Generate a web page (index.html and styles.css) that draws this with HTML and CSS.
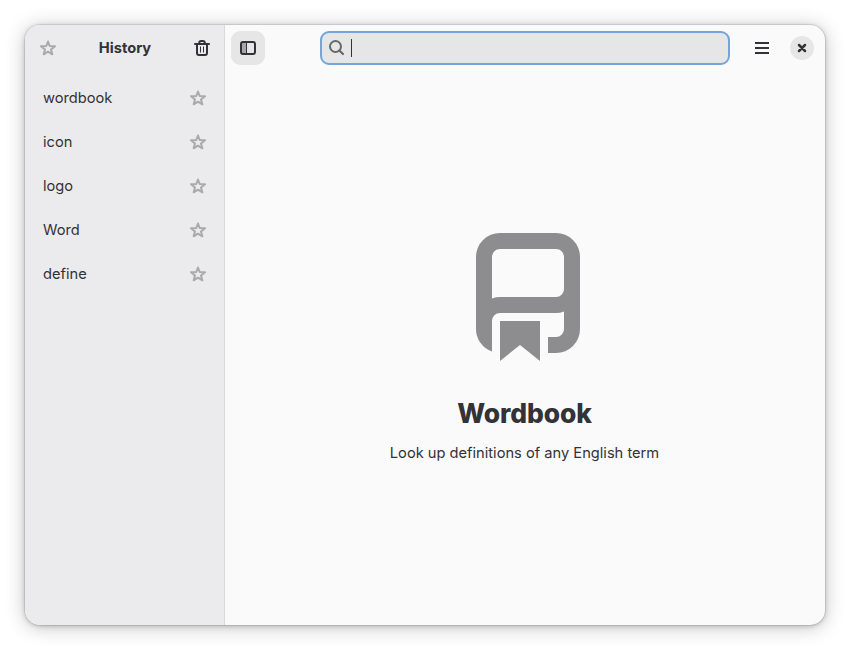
FILE: index.html
```html
<!DOCTYPE html>
<html lang="en">
<head>
<meta charset="utf-8">
<title>Wordbook</title>
<link rel="stylesheet" href="styles.css">
</head>
<body>
<svg class="defs" aria-hidden="true">
  <symbol id="star" viewBox="0 0 16 16"><path d="M8 1.500 9.700 6 15 6.200 11 9.600 12.300 14.300 8 11.700 3.700 14.300 5 9.600 1 6.200 6.300 6Z" fill="none" stroke="currentColor" stroke-width="2" stroke-linejoin="round"/></symbol>
</svg>
<div class="window">
  <aside class="sidebar">
    <header class="side-header">
      <svg class="icon star"><use href="#star"/></svg>
      <h2 class="side-title">History</h2>
      <svg class="icon" viewBox="0 0 16 16" fill="none" stroke="currentColor">
        <path d="M1 4h14" stroke-width="2" stroke-linecap="round"/>
        <path d="M5.200 4V3a2 2 0 0 1 2-2h1.600a2 2 0 0 1 2 2v1M3 4v9a2 2 0 0 0 2 2h6a2 2 0 0 0 2-2V4" stroke-width="2"/>
        <path d="M6.500 6.500v6M9.500 6.500v6" stroke-width="1"/>
      </svg>
    </header>
    <ul class="history">
      <li class="row">wordbook<svg class="icon star"><use href="#star"/></svg></li>
      <li class="row">icon<svg class="icon star"><use href="#star"/></svg></li>
      <li class="row">logo<svg class="icon star"><use href="#star"/></svg></li>
      <li class="row">Word<svg class="icon star"><use href="#star"/></svg></li>
      <li class="row">define<svg class="icon star"><use href="#star"/></svg></li>
    </ul>
  </aside>
  <main class="content">
    <header class="toolbar">
      <button class="toggle" aria-label="Toggle sidebar">
        <svg class="icon" viewBox="0 0 16 16">
          <path d="M2 3h4v10H2z" fill="currentColor" opacity=".35"/>
          <path d="M6.500 2v12" stroke="currentColor"/>
          <rect x="1" y="2" width="14" height="12" rx="2" fill="none" stroke="currentColor" stroke-width="2"/>
        </svg>
      </button>
      <div class="search">
        <svg class="icon search-icon" viewBox="0 0 16 16" fill="none" stroke="currentColor" stroke-width="2"><circle cx="6.500" cy="6.500" r="5.500"/><path d="m10.500 10.500 3.500 3.500" stroke-width="2.200" stroke-linecap="round"/></svg>
        <span class="caret"></span>
      </div>
      <svg class="icon menu" viewBox="0 0 16 16"><path d="M1 3h14M1 8h14M1 13h14" stroke="currentColor" stroke-width="2"/></svg>
      <button class="close" aria-label="Close">
        <svg class="icon" viewBox="0 0 16 16"><path d="m5 5 6 6M11 5l-6 6" stroke="currentColor" stroke-width="2.500" stroke-linecap="round"/></svg>
      </button>
    </header>
    <section class="status">
      <svg class="book" viewBox="0 0 128 128" fill="currentColor">
        <path fill-rule="evenodd" d="M40 0h56a24 24 0 0 1 24 24v72a24 24 0 0 1-24 24H88v-16h8a8 8 0 0 0 8-8V78.400Q100 80 96 80H40a8 8 0 0 0-8 8v30.600A24 24 0 0 1 16 96V24A24 24 0 0 1 40 0ZM40 16a8 8 0 0 0-8 8v41.400Q36 64 40 64h56a8 8 0 0 0 8-8V24a8 8 0 0 0-8-8Z"/>
        <path d="M40 88h40v40L60 112 40 128Z"/>
      </svg>
      <h1 class="title">Wordbook</h1>
      <p class="description">Look up definitions of any English term</p>
    </section>
  </main>
</div>
</body>
</html>
```
FILE: styles.css
```css
* { box-sizing: border-box; }
body {
  margin: 0;
  padding: 25px;
  height: 650px;
  overflow: hidden;
  background: #fff;
  color: #323237;
  font: 14.667px/20px Inter, sans-serif;
}
.defs { position: absolute; width: 0; height: 0; }
.window {
  display: flex;
  width: 800px;
  height: 600px;
  border-radius: 15px;
  overflow: hidden;
  background: #fafafa;
  box-shadow: 0 0 0 1px rgba(0, 0, 0, .08), 0 1px 5px rgba(0, 0, 0, .2), 0 2px 20px rgba(0, 0, 0, .24);
}
.icon { display: block; flex: none; width: 16px; height: 16px; }
.star { color: #aaaaac; }
.sidebar {
  width: 200px;
  flex: none;
  background: #ebebed;
  border-right: 1px solid #d9d9db;
}
.side-header {
  display: flex;
  align-items: center;
  justify-content: space-between;
  height: 46px;
  padding: 0 14px 0 15px;
}
.side-title { margin: 0; font-size: 14.667px; font-weight: 700; }
.history { list-style: none; margin: 0; padding: 5px 18px 0; }
.row {
  display: flex;
  align-items: center;
  justify-content: space-between;
  height: 44px;
}
.content { flex: 1; display: flex; flex-direction: column; }
.toolbar {
  display: flex;
  align-items: center;
  height: 46px;
  padding: 0 11px 0 6px;
}
button { border: 0; padding: 0; color: inherit; background: #e6e6e6; display: grid; place-items: center; }
.toggle { width: 34px; height: 34px; border-radius: 9px; }
.search {
  display: flex;
  align-items: center;
  width: 410px;
  height: 34px;
  margin-left: 55px;
  padding-left: 7px;
  border: 2px solid #75a5d8;
  border-radius: 9px;
  background: #e6e6e6;
}
.search-icon { color: #68686b; }
.caret { width: 1px; height: 18px; margin-left: 6px; background: #323237; }
.menu { margin-left: 24px; }
.close { width: 24px; height: 24px; margin-left: 20px; border-radius: 50%; }
.status {
  display: flex;
  flex-direction: column;
  align-items: center;
  padding: 162px 1px 0 0;
}
.book { width: 128px; height: 128px; margin-right: 1px; color: #8d8d8f; }
.title { margin: 36px 0 0; font-size: 26.4px; line-height: 32px; font-weight: 800; letter-spacing: -.1px; }
.description { margin: 14px 0 0; }
```
